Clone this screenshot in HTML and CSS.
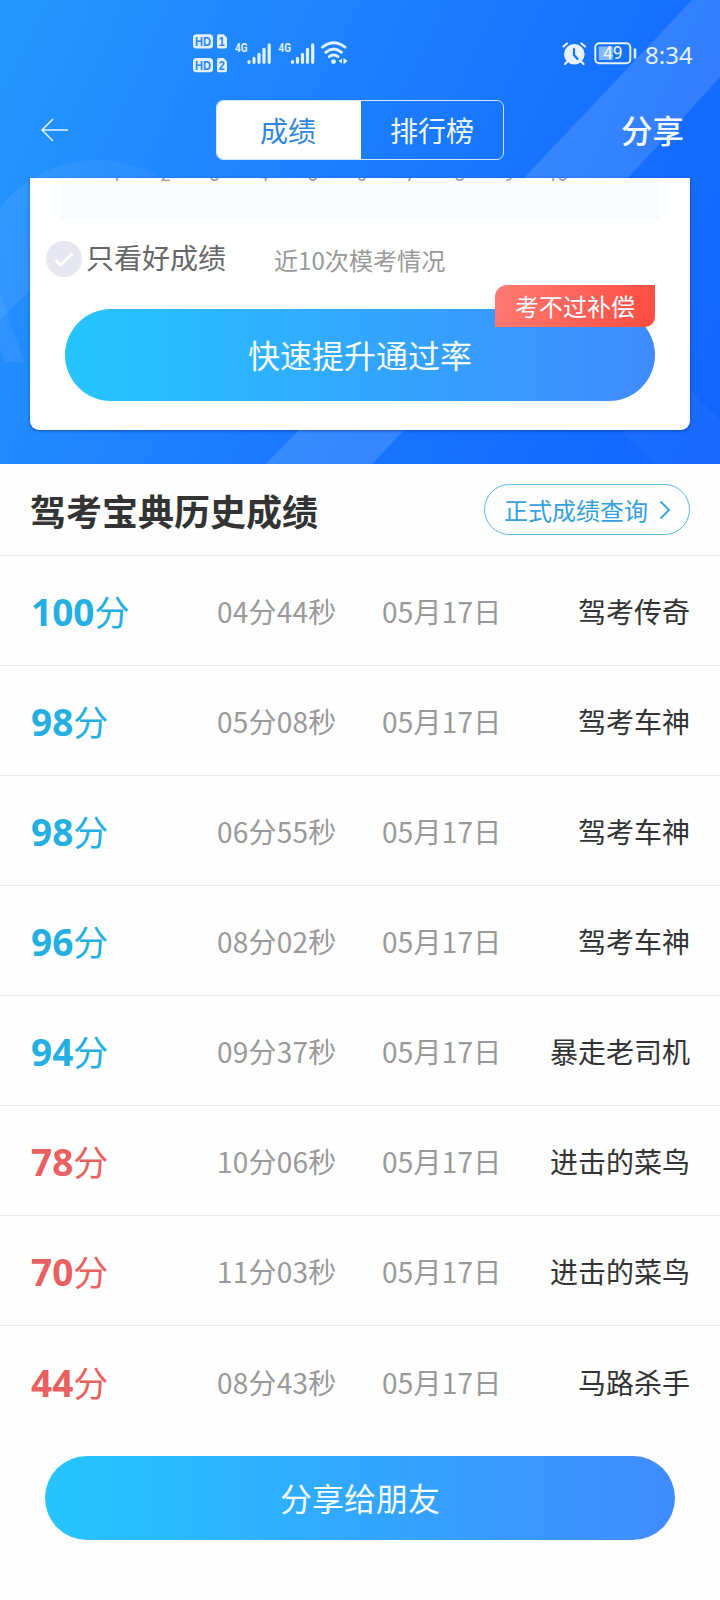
FILE: index.html
```html
<!DOCTYPE html>
<html lang="zh-CN">
<head>
<meta charset="utf-8">
<title>成绩</title>
<link rel="stylesheet" href="styles.css">
</head>
<body>
<header class="hero">
  <svg class="hero-bg" viewBox="0 0 720 464" aria-hidden="true">
    <defs><linearGradient id="fade" x1="0" y1="0" x2="1" y2="0"><stop offset="0" stop-color="#fff" stop-opacity=".07"/><stop offset="1" stop-color="#fff" stop-opacity=".02"/></linearGradient></defs>
    <path d="M692 0H720V77L628 178L403 431L372 464H266L298 431L524 178Z" fill="#fff" fill-opacity=".13"/>
    <path d="M0 208A122 122 0 0 1 219 282H38L0 320Z" fill="url(#fade)"/>
    <path d="M0 292L24 362H5L0 348Z" fill="#fff" fill-opacity=".06"/>
    <path d="M620 320L690 390L720 420V464H655L600 410Z" fill="#fff" fill-opacity=".03"/>
  </svg>
  <div class="status">
    <div class="status-left">
      <svg width="170" height="46" viewBox="0 0 170 46">
        <g fill="#e1f1ff">
          <rect x="1" y="1.200" width="20" height="14.300" rx="3.500"/>
          <path d="M25 3.200q0-2 2-2h4.500l3.500 3.500v8.800q0 2-2 2h-6q-2 0-2-2z"/>
          <rect x="1" y="25" width="20" height="14.300" rx="3.500"/>
          <path d="M25 27q0-2 2-2h4.500l3.500 3.500v8.800q0 2-2 2h-6q-2 0-2-2z"/>
        </g>
        <g class="badge-text"><text x="3" y="12.900" textLength="16" lengthAdjust="spacingAndGlyphs">HD</text><text x="26.800" y="12.900" textLength="6" lengthAdjust="spacingAndGlyphs">1</text><text x="3" y="36.700" textLength="16" lengthAdjust="spacingAndGlyphs">HD</text><text x="26.800" y="36.700" textLength="6" lengthAdjust="spacingAndGlyphs">2</text></g>
        <g class="net-text"><text x="43" y="18.500" textLength="12.500" lengthAdjust="spacingAndGlyphs">4G</text><text x="86.500" y="18.500" textLength="12.500" lengthAdjust="spacingAndGlyphs">4G</text></g>
        <g stroke="#e1f1ff" stroke-width="3.200" stroke-linecap="round">
          <path d="M57 29.300v-.800M62 29.300v-4M67 29.300v-8M72 29.300v-13M77.200 29.300v-17.500"/>
          <path d="M100.500 29.300v-.800M105.500 29.300v-4M110.500 29.300v-8M115.500 29.300v-13M120.700 29.300v-17.500"/>
        </g>
        <g fill="none" stroke="#e1f1ff" stroke-width="2.900" stroke-linecap="round"><path d="M130.500 14.200q11.200-9 22.500 0M133.800 19.300q7.900-6.500 15.700 0M137.300 23.700q4.400-3.300 8.700 0"/></g>
        <circle cx="141.500" cy="28.600" r="2.400" fill="#e1f1ff"/>
        <path d="M146.500 28l3.500-2.500v5zM151.500 25v6.500l4-3.500z" fill="#e1f1ff"/>
      </svg>
    </div>
    <div class="status-right">
      <svg width="76" height="26" viewBox="0 0 76 26">
        <circle cx="12.300" cy="13.200" r="10.300" fill="#e6f2ff"/>
        <path d="M1.500 5.500l3.500-3M19.500 2.500l3.500 3M5.500 20.500l-2.500 2.500M19 20.500l2.500 2.500" stroke="#e6f2ff" stroke-width="2.200" stroke-linecap="round"/>
        <path d="M12 8v6l3.500 4" fill="none" stroke="#1a76ff" stroke-width="2.200" stroke-linecap="round"/>
        <rect x="33.300" y="2.300" width="35" height="20" rx="4" fill="none" stroke="#e1f1ff" stroke-width="2"/>
        <rect x="36.800" y="5.500" width="14" height="13.500" rx="1" fill="#84b8ff"/>
        <path d="M73 7.500v10" stroke="#e1f1ff" stroke-width="2.600"/>
        <text class="battery-text" x="50.800" y="18.400" text-anchor="middle">49</text>
      </svg>
      <span class="clock">8:34</span>
    </div>
  </div>
  <nav class="nav">
    <svg class="back" width="28" height="24" viewBox="0 0 28 24"><path d="M13 1L2 12L13 23M2 12H28" fill="none" stroke="#e6f2ff" stroke-width="1.500"/></svg>
    <div class="tabs"><span class="tab tab-on">成绩</span><span class="tab">排行榜</span></div>
    <span class="share">分享</span>
  </nav>
  <section class="card">
    <div class="plot">
      <div class="axis"><span>1</span><span>2</span><span>3</span><span>4</span><span>5</span><span>6</span><span>7</span><span>8</span><span>9</span><span>10</span></div>
    </div>
    <div class="filter">
      <svg width="36" height="36" viewBox="0 0 36 36"><circle cx="18" cy="18" r="18" fill="#e7e7f2"/><path d="M9.500 19l5 5L26.500 12.500" fill="none" stroke="#fff" stroke-width="2.800"/></svg>
      <span class="filter-name">只看好成绩</span><span class="filter-note">近10次模考情况</span>
    </div>
    <div class="boost">快速提升通过率<span class="promo">考不过补偿</span></div>
  </section>
</header>
<main>
  <div class="heading"><h1>驾考宝典历史成绩</h1>
    <div class="query"><span>正式成绩查询</span><svg width="12" height="20" viewBox="0 0 12 20"><path d="M1.500 1.500L10 10L1.500 18.500" fill="none" stroke="#35a7df" stroke-width="1.900"/></svg></div>
  </div>
  <ul class="list">
    <li class="row"><span class="score"><b>100</b>分</span><span class="time">04分44秒</span><span class="date">05月17日</span><span class="rank">驾考传奇</span></li>
    <li class="row"><span class="score"><b>98</b>分</span><span class="time">05分08秒</span><span class="date">05月17日</span><span class="rank">驾考车神</span></li>
    <li class="row"><span class="score"><b>98</b>分</span><span class="time">06分55秒</span><span class="date">05月17日</span><span class="rank">驾考车神</span></li>
    <li class="row"><span class="score"><b>96</b>分</span><span class="time">08分02秒</span><span class="date">05月17日</span><span class="rank">驾考车神</span></li>
    <li class="row"><span class="score"><b>94</b>分</span><span class="time">09分37秒</span><span class="date">05月17日</span><span class="rank">暴走老司机</span></li>
    <li class="row"><span class="score fail"><b>78</b>分</span><span class="time">10分06秒</span><span class="date">05月17日</span><span class="rank">进击的菜鸟</span></li>
    <li class="row"><span class="score fail"><b>70</b>分</span><span class="time">11分03秒</span><span class="date">05月17日</span><span class="rank">进击的菜鸟</span></li>
    <li class="row"><span class="score fail"><b>44</b>分</span><span class="time">08分43秒</span><span class="date">05月17日</span><span class="rank">马路杀手</span></li>
  </ul>
  <div class="send">分享给朋友</div>
</main>
</body>
</html>
```
FILE: styles.css
```css
* { box-sizing: border-box; }
body { margin: 0; width: 720px; height: 1600px; overflow: hidden; background: #fefefe; font-family: "Noto Sans CJK SC", sans-serif; color: #333; }
.hero { position: relative; height: 464px; background: linear-gradient(115deg, #2597ff 0%, #1e80ff 40%, #1670ff 72%, #1164ff 100%); }
.hero-bg { position: absolute; left: 0; top: 0; width: 720px; height: 464px; }
.status, .nav, .card { position: relative; }
.status { height: 100px; padding: 33px 28px 0 192px; display: flex; justify-content: space-between; }
.status-left { width: 170px; height: 46px; }
.status-right { display: flex; height: 42px; gap: 6px; }
.status-right svg { margin-top: 8px; }
.badge-text { font: bold 13px "Liberation Sans", sans-serif; fill: #2b84f0; }
.net-text { font: bold 13px Roboto, sans-serif; fill: #e1f1ff; }
.battery-text { font: 17.500px Roboto, sans-serif; fill: #f2f8ff; }
.clock { font: 24px/44px "Noto Sans", sans-serif; color: #e1f1ff; width: 48px; padding-left: 1px; white-space: nowrap; }
.nav { height: 60px; padding: 0 36px 0 40px; display: flex; align-items: center; justify-content: space-between; }
.tabs { display: flex; width: 288px; height: 60px; border: 1px solid #cfe5ff; border-radius: 7px; overflow: hidden; margin-left: 31px; }
.tab { flex: 1; line-height: 58px; text-align: center; font-size: 28px; color: #eef7ff; }
.tab-on { flex: 0 0 144px; padding-right: 2px; background: #fff; color: #2f86dc; }
.share { font-size: 31.500px; font-weight: 500; line-height: 60px; margin-top: -2px; color: #f4faff; }
.card { margin: 18px 30px 0; height: 252px; background: #fff; border-radius: 0 0 9px 9px; box-shadow: 0 1px 3px rgba(0, 30, 90, .5); padding: 0 16px 0; }
.plot { height: 42px; margin: 0 14px; background: #f8fcff; overflow: hidden; padding-left: 32px; }
.axis { display: flex; margin-top: -13px; font: 18px/20px Roboto, sans-serif; color: #929aa5; }
.axis span { width: 49px; text-align: center; flex: none; }
.filter { display: flex; align-items: center; height: 36px; margin-top: 21px; }
.filter-name { font-size: 28px; line-height: 36px; margin-top: -4px; color: #666; margin-left: 4px; width: 188px; }
.filter-note { font-size: 24.100px; line-height: 36px; color: #999; margin-top: 2px; }
.boost, .send { background: linear-gradient(90deg, #26c3ff 5%, #32a7ff 50%, #408bff 100%); color: #f4fcff; text-align: center; font-size: 32px; }
.boost { position: relative; width: 590px; height: 92px; margin: 32px 0 0 19px; border-radius: 46px; line-height: 91px; }
.promo { position: absolute; right: 0; top: -24px; width: 160px; height: 42px; border-radius: 12px 0 10px 0; background: linear-gradient(110deg, #ff7b74, #ff4b40); font-size: 24px; line-height: 42px; }
.heading { height: 92px; padding: 0 30px; border-bottom: 1px solid #e8e8e8; display: flex; align-items: center; justify-content: space-between; }
h1 { margin: 0; font-size: 36px; line-height: 60px; font-weight: 700; }
.query { display: flex; align-items: center; justify-content: space-between; width: 206px; height: 51px; border: 1px solid #5eb9df; border-radius: 26px; padding: 0 18px 0 19px; font-size: 24px; color: #35a0dc; }
.list { list-style: none; margin: 0; padding: 0; }
.row { height: 110px; padding: 1px 30px 0; border-bottom: 1px solid #e8e8e8; display: grid; grid-template-columns: 187px 165px 130px 1fr; align-items: center; font-size: 28px; white-space: nowrap; }
.row:last-child { border-bottom: 0; }
.score { color: #24afe2; font-size: 35px; padding-left: 1px; }
.score b { font-family: "Noto Sans", sans-serif; font-weight: 700; font-size: 37px; }
.fail { color: #e96060; }
.time, .date { color: #999; letter-spacing: .2px; }
.rank { text-align: right; }
.send { width: 630px; height: 84px; border-radius: 42px; line-height: 83px; margin: 20px auto 0; }
```
